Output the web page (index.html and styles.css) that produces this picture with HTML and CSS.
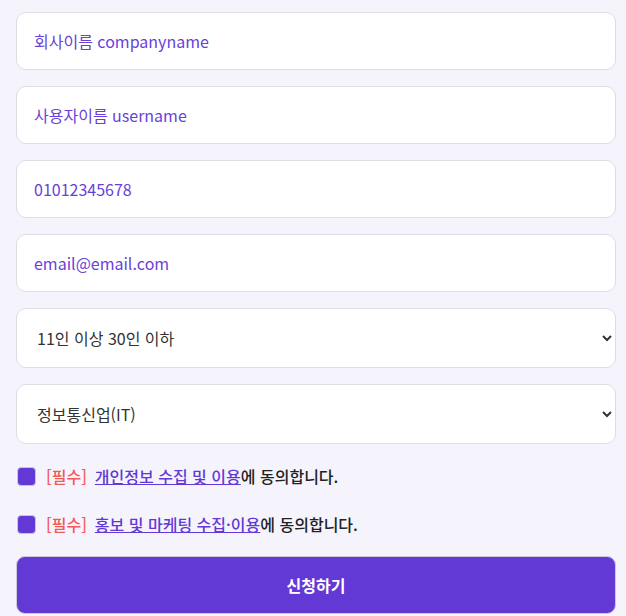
FILE: index.html
```html
<!DOCTYPE html>
<html lang="ko">
<head>
<meta charset="utf-8">
<title>신청</title>
<link rel="stylesheet" href="styles.css">
</head>
<body>
<form class="form">
  <input class="field" type="text" placeholder="회사이름 companyname">
  <input class="field" type="text" placeholder="사용자이름 username">
  <input class="field" type="text" placeholder="01012345678">
  <input class="field" type="text" placeholder="email@email.com">
  <select class="select">
    <option>11인 이상 30인 이하</option>
  </select>
  <select class="select">
    <option>정보통신업(IT)</option>
  </select>
  <div class="agrees">
    <label class="agree"><span class="box"></span><span class="label-text"><span class="req">[필수]</span><a class="link" href="#">개인정보 수집 및 이용</a>에 동의합니다.</span></label>
    <label class="agree"><span class="box"></span><span class="label-text"><span class="req">[필수]</span><a class="link" href="#">홍보 및 마케팅 수집·이용</a>에 동의합니다.</span></label>
  </div>
  <button class="submit" type="button">신청하기</button>
</form>
</body>
</html>
```
FILE: styles.css
```css
html, body {
  margin: 0;
  padding: 0;
  background: #f5f4fd;
}
body {
  font-family: "Noto Sans CJK KR", "Noto Sans", sans-serif;
}
.form {
  width: 600px;
  padding: 12px 0 0 16px;
  display: flex;
  flex-direction: column;
  gap: 16px;
}
.field {
  box-sizing: border-box;
  height: 58px;
  width: 100%;
  border: 1px solid #dddde3;
  border-radius: 10px;
  background: #fff;
  padding: 0 17px;
  font-family: inherit;
  font-size: 16px;
  color: #6238d6;
  outline: none;
}
.field::placeholder {
  color: #6a3fd9;
  opacity: 1;
}
.select {
  box-sizing: border-box;
  height: 60px;
  width: 100%;
  border: 1px solid #dddde3;
  border-radius: 10px;
  background: #fff;
  padding: 0 16px;
  font-family: inherit;
  font-size: 16px;
  color: #333;
}
.agrees {
  display: flex;
  flex-direction: column;
  gap: 28px;
  padding: 6px 0 6px 1px;
}
.agree {
  display: flex;
  align-items: center;
  font-size: 16px;
  font-weight: 500;
  color: #222;
  line-height: 20px;
}
.box {
  width: 19px;
  height: 19px;
  border-radius: 4px;
  background: #6239d6;
  border: 1px solid #c8c2e4;
  box-sizing: border-box;
  margin-right: 10px;
}
.req {
  color: #f25a5a;
  margin-right: 8px;
}
.link {
  color: #6238d6;
  text-decoration: underline;
}
.submit {
  height: 58px;
  width: 100%;
  border: 1px solid #cfcadb;
  border-radius: 9px;
  background: #6239d4;
  color: #fff;
  font-family: inherit;
  font-size: 16px;
  font-weight: 700;
}
```
